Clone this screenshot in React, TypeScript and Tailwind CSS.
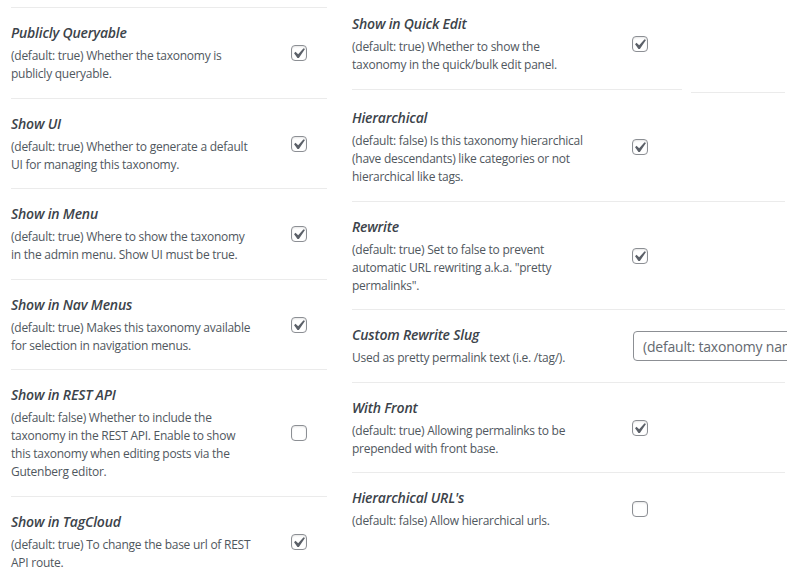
import React from "react";

type Row = {
  title: string;
  lines: string[];
  control: "on" | "off" | "input";
};

const left: Row[] = [
  { title: "Publicly Queryable", lines: ["(default: true) Whether the taxonomy is", "publicly queryable."], control: "on" },
  { title: "Show UI", lines: ["(default: true) Whether to generate a default", "UI for managing this taxonomy."], control: "on" },
  { title: "Show in Menu", lines: ["(default: true) Where to show the taxonomy", "in the admin menu. Show UI must be true."], control: "on" },
  { title: "Show in Nav Menus", lines: ["(default: true) Makes this taxonomy available", "for selection in navigation menus."], control: "on" },
  {
    title: "Show in REST API",
    lines: [
      "(default: false) Whether to include the",
      "taxonomy in the REST API. Enable to show",
      "this taxonomy when editing posts via the",
      "Gutenberg editor.",
    ],
    control: "off",
  },
  { title: "Show in TagCloud", lines: ["(default: true) To change the base url of REST", "API route."], control: "on" },
];

const right: Row[] = [
  { title: "Hierarchical", lines: ["(default: false) Is this taxonomy hierarchical", "(have descendants) like categories or not", "hierarchical like tags."], control: "on" },
  { title: "Rewrite", lines: ["(default: true) Set to false to prevent", "automatic URL rewriting a.k.a. \"pretty", "permalinks\"."], control: "on" },
  { title: "Custom Rewrite Slug", lines: ["Used as pretty permalink text (i.e. /tag/)."], control: "input" },
  { title: "With Front", lines: ["(default: true) Allowing permalinks to be", "prepended with front base."], control: "on" },
  { title: "Hierarchical URL's", lines: ["(default: false) Allow hierarchical urls."], control: "off" },
];

function Checkbox({ checked }: { checked: boolean }) {
  return (
    <div className="relative w-[16px] h-[16px] shrink-0 rounded-[4px] border border-[#8c8f94] bg-white shadow-[inset_0_1px_2px_rgba(0,0,0,0.1)]">
      {checked && (
        <svg
          className="absolute left-[-4px] top-[-3px]"
          width="21"
          height="21"
          viewBox="0 0 20 20"
        >
          <path d="M14.83 4.89l1.34.94-5.81 8.38H9.02L5.78 9.67l1.34-1.25 2.57 2.4z" fill="#5b6068" />
        </svg>
      )}
    </div>
  );
}

function Text({ row }: { row: Row }) {
  return (
    <div className="w-[280px] shrink-0">
      <div className="text-[14px] leading-[20px] font-semibold italic tracking-[-0.2px] text-[#3c434a] mb-[4px] whitespace-nowrap">
        {row.title}
      </div>
      <div className="text-[12px] leading-[18px] tracking-[-0.25px] text-[#50575e]">
        {row.lines.map((l, i) => (
          <div key={i} className="whitespace-nowrap">
            {l}
          </div>
        ))}
      </div>
    </div>
  );
}

function Control({ row }: { row: Row }) {
  if (row.control === "input") {
    return (
      <div className="ml-[1px] h-[30px] w-[200px] shrink-0 rounded-[4px] border border-[#8c8f94] flex items-center pl-[9px] text-[14px] tracking-[-0.2px] text-[#646970] whitespace-nowrap overflow-hidden">
        (default: taxonomy name)
      </div>
    );
  }
  return <Checkbox checked={row.control === "on"} />;
}

function RowView({ row, last }: { row: Row; last?: boolean }) {
  return (
    <div className={`flex items-center pt-[15px] pb-[14.5px] ${last ? "" : "border-b border-[#ebebeb]"}`}>
      <Text row={row} />
      <Control row={row} />
    </div>
  );
}

export default function App() {
  return (
    <div
      className="w-[787px] h-[583px] overflow-hidden bg-white flex"
      style={{ fontFamily: '"Open Sans", "Noto Sans", sans-serif' }}
    >
      <div className="ml-[11px] w-[316px] mt-[7px] border-t border-[#ebebeb] shrink-0 flex flex-col">
        {left.map((r, i) => (
          <RowView key={i} row={r} last={i === left.length - 1} />
        ))}
      </div>
      <div className="ml-[25px] w-[433px] shrink-0 flex flex-col">
        <div className="flex items-center pt-[14px] pb-[15px]">
          <Text row={{ title: "Show in Quick Edit", lines: ["(default: true) Whether to show the", "taxonomy in the quick/bulk edit panel."], control: "on" }} />
          <Checkbox checked />
        </div>
        <div className="flex h-[4px] items-start">
          <div className="w-[330px] h-px bg-[#ebebeb]" />
          <div className="ml-[9px] w-[94px] h-px mt-[3px] bg-[#ebebeb]" />
        </div>
        {right.map((r, i) => (
          <RowView key={i} row={r} last={i === right.length - 1} />
        ))}
      </div>
    </div>
  );
}
